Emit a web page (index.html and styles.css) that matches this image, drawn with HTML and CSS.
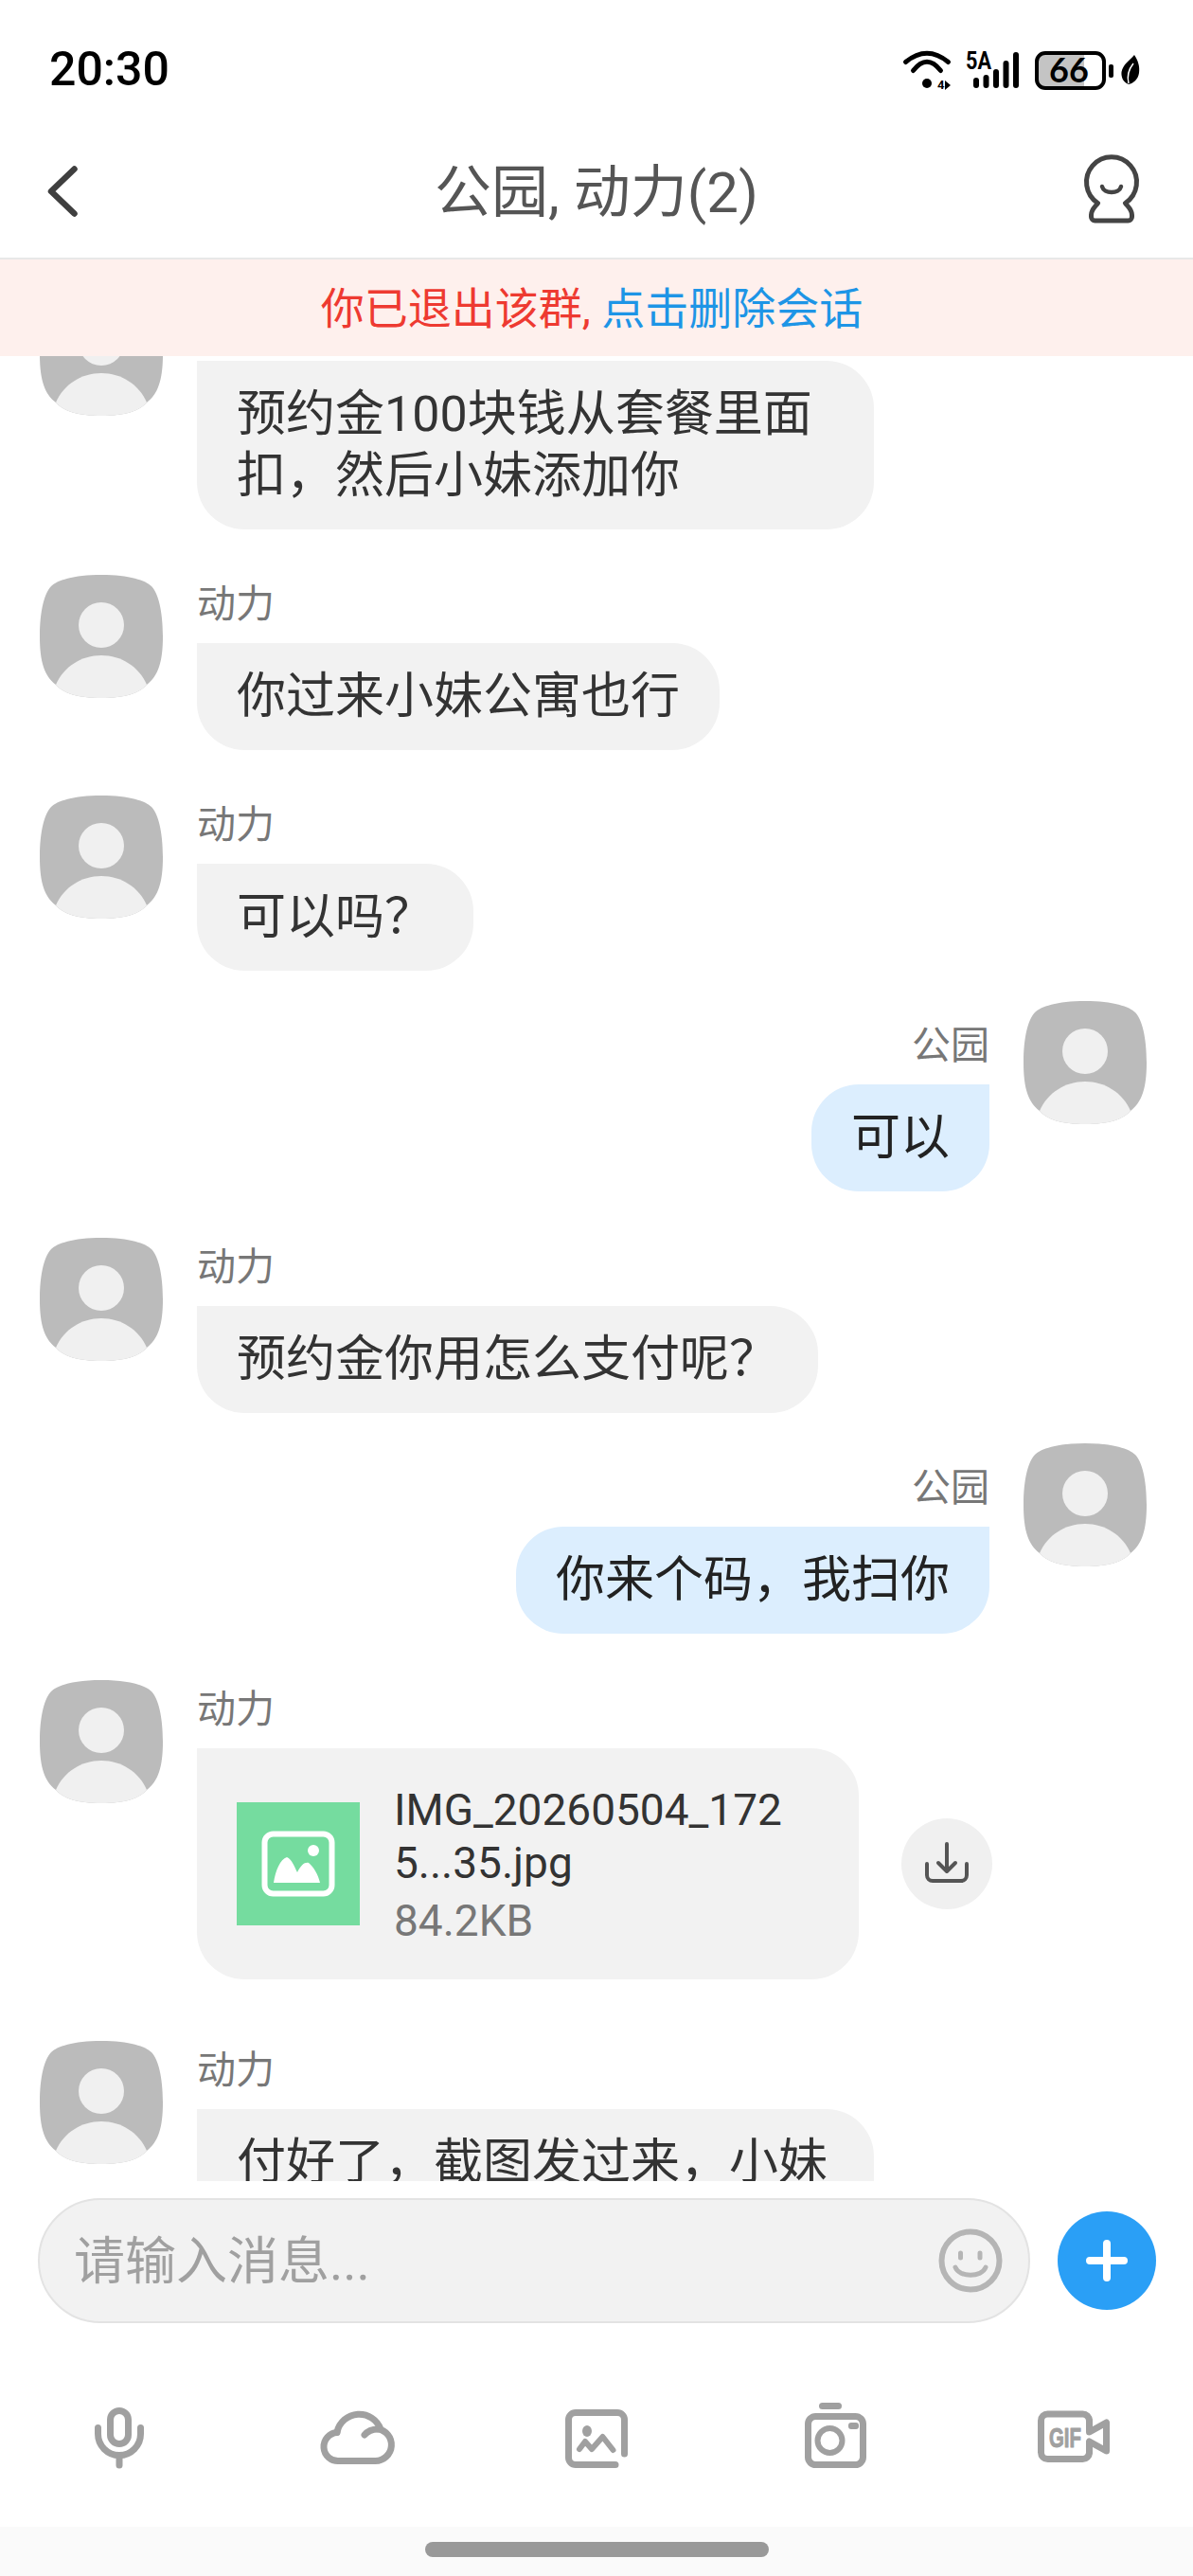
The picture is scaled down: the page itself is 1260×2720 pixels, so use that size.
FILE: index.html
```html
<!DOCTYPE html>
<html lang="zh-CN">
<head>
<meta charset="utf-8">
<title>公园, 动力(2)</title>
<link rel="stylesheet" href="styles.css">
</head>
<body>
<svg class="sprite" xmlns="http://www.w3.org/2000/svg">
  <symbol id="avatar" viewBox="0 0 130 130">
    <path fill="#bbbbbb" d="M65 0C95 0 112 6 118 12C125 19 130 38 130 65C130 92 125 107 113 116C105 125 90 130 65 130C40 130 25 125 17 116C5 107 0 92 0 65C0 38 5 19 12 12C18 6 35 0 65 0Z"/>
    <circle cx="65" cy="53" r="24" fill="#f0f0f0"/>
    <path fill="#f0f0f0" d="M17 116C25 97 44 85 65 85C86 85 105 97 113 116C105 125 90 130 65 130C40 130 25 125 17 116Z"/>
  </symbol>
</svg>
<div class="phone">
  <div class="status">
    <div class="time">20:30</div>
    <div class="status-icons">
      <svg class="ic-wifi" viewBox="0 0 52 42" fill="none" stroke="#000" stroke-width="5" stroke-linecap="round">
        <path d="M2.5 11.5Q25 -7 47.5 11.5"/>
        <path d="M10.5 20.5Q25 2 39.5 20.5"/>
        <circle cx="25" cy="34" r="5" fill="#000" stroke="none"/>
        <text x="36" y="40" class="wifi-4">4</text>
        <path d="M44 31L44 41L50 36Z" fill="#000" stroke="none"/>
      </svg>
      <svg class="ic-signal" viewBox="0 0 57 38">
        <text x="0" y="18" class="sig-5a" textLength="27" lengthAdjust="spacingAndGlyphs">5A</text>
        <rect x="8" y="27" width="6" height="11" rx="3"/>
        <rect x="18.5" y="24" width="6" height="14" rx="3"/>
        <rect x="29" y="18" width="6" height="20" rx="3"/>
        <rect x="39.5" y="9" width="6" height="29" rx="3"/>
        <rect x="50" y="0" width="6" height="38" rx="3"/>
      </svg>
      <svg class="ic-batt" viewBox="0 0 84 41">
        <path fill="#c4c4c4" d="M10 2H52V39H10A8 8 0 0 1 2 31V10A8 8 0 0 1 10 2Z"/>
        <rect x="2" y="2" width="71" height="37" rx="9" fill="none" stroke="#000" stroke-width="4"/>
        <text x="36" y="33" class="batt-num" text-anchor="middle">66</text>
        <rect x="78" y="14" width="5" height="14" rx="2"/>
      </svg>
      <svg class="ic-leaf" viewBox="0 0 20 32">
        <path d="M14 0C18 6 20 12 19 19C18 26 13 30 8 31C2 29 0 23 0.5 18C2 10 9 6 14 0Z"/>
        <path d="M8 30C6 22 9 14 13 9" fill="none" stroke="#fff" stroke-width="1.5"/>
      </svg>
    </div>
  </div>

  <header class="header">
    <svg class="ic-back" viewBox="0 0 32 54" fill="none" stroke="#3f3f3f" stroke-width="6.5" stroke-linecap="round" stroke-linejoin="round">
      <path d="M28.5 3.5L4 27L28.5 50.5"/>
    </svg>
    <h1 class="title">公园, 动力(2)</h1>
    <svg class="ic-profile" viewBox="0 0 58 71" fill="none" stroke="#444" stroke-width="5" stroke-linecap="round" stroke-linejoin="round">
      <path d="M14.5 49.5A26.5 26.5 0 1 1 43.5 49.5C46 53 50.5 56 50.5 62V64a4 4 0 0 1-4 4H11.5a4 4 0 0 1-4-4V62C7.5 56 12 53 14.5 49.5Z"/>
      <path d="M19 32C21 40 37 40 39 32" stroke-width="4.5"/>
    </svg>
  </header>

  <div class="banner"><span class="banner-red">你已退出该群, </span><span class="banner-blue">点击删除会话</span></div>

  <main class="chat">
    <div class="list">
      <div class="row">
        <svg class="avatar"><use href="#avatar"/></svg>
        <div class="body">
          <div class="name">动力</div>
          <div class="bubble">预约金100块钱从套餐里面扣，然后小妹添加你</div>
        </div>
      </div>
      <div class="row">
        <svg class="avatar"><use href="#avatar"/></svg>
        <div class="body">
          <div class="name">动力</div>
          <div class="bubble">你过来小妹公寓也行</div>
        </div>
      </div>
      <div class="row">
        <svg class="avatar"><use href="#avatar"/></svg>
        <div class="body">
          <div class="name">动力</div>
          <div class="bubble">可以吗？</div>
        </div>
      </div>
      <div class="row row-me">
        <div class="body body-me">
          <div class="name">公园</div>
          <div class="bubble bubble-me">可以</div>
        </div>
        <svg class="avatar"><use href="#avatar"/></svg>
      </div>
      <div class="row">
        <svg class="avatar"><use href="#avatar"/></svg>
        <div class="body">
          <div class="name">动力</div>
          <div class="bubble">预约金你用怎么支付呢？</div>
        </div>
      </div>
      <div class="row row-me">
        <div class="body body-me">
          <div class="name">公园</div>
          <div class="bubble bubble-me">你来个码，我扫你</div>
        </div>
        <svg class="avatar"><use href="#avatar"/></svg>
      </div>
      <div class="row row-file">
        <svg class="avatar"><use href="#avatar"/></svg>
        <div class="body">
          <div class="name">动力</div>
          <div class="file-line">
            <div class="file">
              <div class="file-thumb">
                <svg class="ic-picture" viewBox="0 0 78 70">
                  <rect x="3.5" y="3.5" width="71" height="63" rx="9" fill="none" stroke="#fff" stroke-width="6"/>
                  <circle cx="55" cy="21" r="6" fill="#fff"/>
                  <path fill="#fff" d="M13 55C15 42 20 30 27 28C32 30 35 38 38 44C42 36 46 33 50 34C55 38 60 46 62 55Z"/>
                </svg>
              </div>
              <div class="file-info">
                <div class="file-name">IMG_20260504_172<br>5...35.jpg</div>
                <div class="file-size">84.2KB</div>
              </div>
            </div>
            <div class="download">
              <svg class="ic-download" viewBox="0 0 48 48" fill="none" stroke="#555" stroke-width="4" stroke-linecap="round" stroke-linejoin="round">
                <path d="M3 24V36a6 6 0 0 0 6 6H39a6 6 0 0 0 6-6V24"/>
                <path d="M24 3V31"/>
                <path d="M15 23L24 32L33 23"/>
              </svg>
            </div>
          </div>
        </div>
      </div>
      <div class="row">
        <svg class="avatar"><use href="#avatar"/></svg>
        <div class="body">
          <div class="name">动力</div>
          <div class="bubble bubble-cut">付好了，截图发过来，小妹</div>
        </div>
      </div>
    </div>
  </main>

  <div class="composer">
    <div class="input">
      <span class="placeholder">请输入消息...</span>
      <svg class="ic-smile" viewBox="0 0 68 68" fill="none" stroke="#b5b5b5" stroke-width="5" stroke-linecap="round">
        <circle cx="34" cy="34" r="30.5" stroke-width="6"/>
        <path d="M23.5 26V31M44 26V31"/>
        <path d="M18 41C22 52 46 52 50 41"/>
      </svg>
    </div>
    <div class="plus">
      <svg class="ic-plus" viewBox="0 0 44 44" fill="none" stroke="#fff" stroke-width="8" stroke-linecap="round">
        <path d="M22 4V40M4 22H40"/>
      </svg>
    </div>
  </div>

  <nav class="tools">
    <div class="tool">
      <svg class="tool-ic" viewBox="0 0 90 80">
        <rect x="35.5" y="11.5" width="19" height="35" rx="9.5"/>
        <path d="M22.5 29.5V36a22.5 22.5 0 0 0 45 0V29.5"/>
        <path d="M45 60V69"/>
      </svg>
    </div>
    <div class="tool">
      <svg class="tool-ic" viewBox="0 0 90 80">
        <path d="M25 64.5H63.5A17 17 0 0 0 66 30.7"/>
        <path d="M52 37Q57 31 66 31"/>
        <path d="M69 31A24 24 0 0 0 23 34"/>
        <path d="M23 34.5A15 15 0 0 0 25 64.5"/>
      </svg>
    </div>
    <div class="tool">
      <svg class="tool-ic" viewBox="0 0 90 80">
        <path d="M74.5 57V21a7.5 7.5 0 0 0-7.5-7.5H23a7.5 7.5 0 0 0-7.5 7.5V61a7.5 7.5 0 0 0 7.5 7.5H65"/>
        <ellipse class="solid" cx="35" cy="33" rx="5" ry="6"/>
        <path class="thin" d="M27 52L33 44L40 52L51.5 39L62.5 53"/>
      </svg>
    </div>
    <div class="tool">
      <svg class="tool-ic" viewBox="0 0 90 80">
        <rect class="solid" x="28" y="3" width="24" height="7" rx="3.5"/>
        <rect x="16.5" y="17.5" width="58" height="51" rx="8"/>
        <circle class="thin" cx="39.5" cy="43" r="13"/>
        <rect class="solid" x="59" y="24" width="11" height="7" rx="3"/>
      </svg>
    </div>
    <div class="tool">
      <svg class="tool-ic" viewBox="0 0 90 80">
        <path d="M61.5 22a7 7 0 0 0-7-7H17.5a7 7 0 0 0-7 7V55.5a7 7 0 0 0 7 7H54.5a7 7 0 0 0 7-7"/>
        <path d="M61.5 22V34L79.5 24V54L61.5 44V55.5"/>
        <text x="19" y="50" class="gif" textLength="34" lengthAdjust="spacingAndGlyphs">GIF</text>
      </svg>
    </div>
  </nav>

  <div class="navbar"><div class="homebar"></div></div>
</div>
</body>
</html>
```

FILE: styles.css
```css
* { box-sizing: border-box; }
html, body { margin: 0; padding: 0; background: #fff; }
.sprite { display: none; }
.phone {
  width: 1260px;
  height: 2720px;
  display: flex;
  flex-direction: column;
  overflow: hidden;
  font-family: Roboto, "Noto Sans CJK SC", sans-serif;
  color: #333;
}
svg { overflow: visible; }

/* status bar */
.status {
  height: 135px;
  flex: none;
  display: flex;
  justify-content: space-between;
  align-items: flex-start;
  padding: 54px 56px 0 52px;
}
.time { font-size: 50px; line-height: 38px; font-weight: 500; color: #000; }
.status-icons { display: flex; align-items: flex-start; }
.status-icons svg { display: block; flex: none; }
.ic-wifi { width: 52px; height: 42px; }
.ic-signal { width: 57px; height: 38px; margin: 1px 0 0 14px; }
.ic-batt { width: 84px; height: 41px; margin: 0 0 0 16px; }
.ic-leaf { width: 20px; height: 32px; margin: 4px 0 0 7px; }
.wifi-4 { font: 700 13px Roboto, sans-serif; fill: #000; stroke: none; }
.sig-5a { font: 700 25px Roboto, sans-serif; }
.batt-num { font: 700 36px Lato, sans-serif; }

/* header */
.header {
  height: 137px;
  flex: none;
  display: grid;
  grid-template-columns: 1fr auto 1fr;
  align-items: center;
  padding: 0 57px;
}
.ic-back { width: 32px; height: 54px; display: block; margin: -4px 0 0 -7px; }
.ic-profile { width: 58px; height: 71px; display: block; justify-self: end; margin-top: -6px; }
.title { margin: 0; font-size: 60px; line-height: 70px; font-weight: 400; color: #555; white-space: nowrap; }

/* banner */
.banner {
  height: 104px;
  flex: none;
  display: flex;
  align-items: center;
  justify-content: center;
  padding: 0 10px 6px 0;
  background: #fef0ed;
  border-top: 2px solid #e8e8e8;
  font-size: 46px;
  white-space: pre;
}
.banner-red { color: #ee3a31; }
.banner-blue { color: #1d95e6; }

/* chat */
.chat { flex: 1; min-height: 0; overflow: hidden; }
.list { margin-top: -67px; display: flex; flex-direction: column; padding: 0 49px 0 42px; }
.row { display: flex; gap: 36px; align-items: flex-start; margin-top: 48px; }
.row:first-child { margin-top: 0; }
.row-me { justify-content: flex-end; margin-top: 32px; }
.row-me + .row { margin-top: 49px; }
.row-file { margin-bottom: 17px; }
.avatar { width: 130px; height: 130px; flex: none; display: block; }
.body { display: flex; flex-direction: column; align-items: flex-start; }
.body-me { align-items: flex-end; padding-top: 16px; }
.name { font-size: 41px; line-height: 62px; margin-bottom: 10px; color: #777; }
.bubble {
  max-width: 715px;
  padding: 24px 42px;
  font-size: 52px;
  line-height: 65px;
  color: #333;
  background: #f2f2f2;
  border-radius: 0 50px 50px 50px;
}
.bubble-me { background: #dceefe; color: #222; border-radius: 50px 0 50px 50px; }
.bubble-cut { width: 715px; min-height: 178px; }

/* file message */
.file-line { display: flex; align-items: center; gap: 45px; }
.file {
  width: 699px;
  height: 244px;
  display: flex;
  align-items: center;
  gap: 36px;
  padding: 0 42px;
  background: #f2f2f2;
  border-radius: 0 50px 50px 50px;
}
.file-thumb {
  width: 130px;
  height: 130px;
  flex: none;
  display: flex;
  align-items: center;
  justify-content: center;
  background: #75dc9f;
}
.ic-picture { width: 78px; height: 70px; display: block; }
.file-info { font-size: 46px; line-height: 56px; margin-top: 2px; }
.file-name { color: #333; white-space: nowrap; }
.file-size { color: #777; margin-top: 5px; }
.download {
  width: 96px;
  height: 96px;
  flex: none;
  border-radius: 50%;
  background: #f0f0f0;
  display: flex;
  align-items: center;
  justify-content: center;
}
.ic-download { width: 48px; height: 48px; display: block; }

/* composer */
.composer {
  flex: none;
  display: flex;
  align-items: center;
  gap: 29px;
  padding: 18px 39px 0 40px;
}
.input {
  width: 1048px;
  height: 132px;
  flex: none;
  display: flex;
  align-items: center;
  justify-content: space-between;
  padding: 0 27px 0 36px;
  background: #f2f2f2;
  border: 2px solid #e3e3e3;
  border-radius: 66px;
}
.placeholder { font-size: 54px; line-height: 64px; margin-top: 4px; color: #a0a0a0; }
.ic-smile { width: 68px; height: 68px; display: block; }
.plus {
  width: 104px;
  height: 104px;
  flex: none;
  border-radius: 50%;
  background: #2a9ff6;
  display: flex;
  align-items: center;
  justify-content: center;
}
.ic-plus { width: 44px; height: 44px; display: block; }

/* toolbar */
.tools { flex: none; display: flex; margin: 81px 0 54px; }
.tool { flex: 1; display: flex; justify-content: center; }
.tool-ic {
  width: 90px;
  height: 80px;
  display: block;
  fill: none;
  stroke: #a0a0a0;
  stroke-width: 7;
  stroke-linecap: round;
  stroke-linejoin: round;
}
.tool-ic .solid { fill: #a0a0a0; stroke: none; }
.tool-ic .thin { stroke-width: 6; }
.gif { font: 700 29px "Liberation Sans", sans-serif; fill: #a0a0a0; stroke: #a0a0a0; stroke-width: 1; }

/* nav */
.navbar { flex: none; height: 52px; padding-top: 16px; background: #fafafa; display: flex; justify-content: center; }
.homebar { width: 363px; height: 16px; border-radius: 8px; background: #999; }
```
